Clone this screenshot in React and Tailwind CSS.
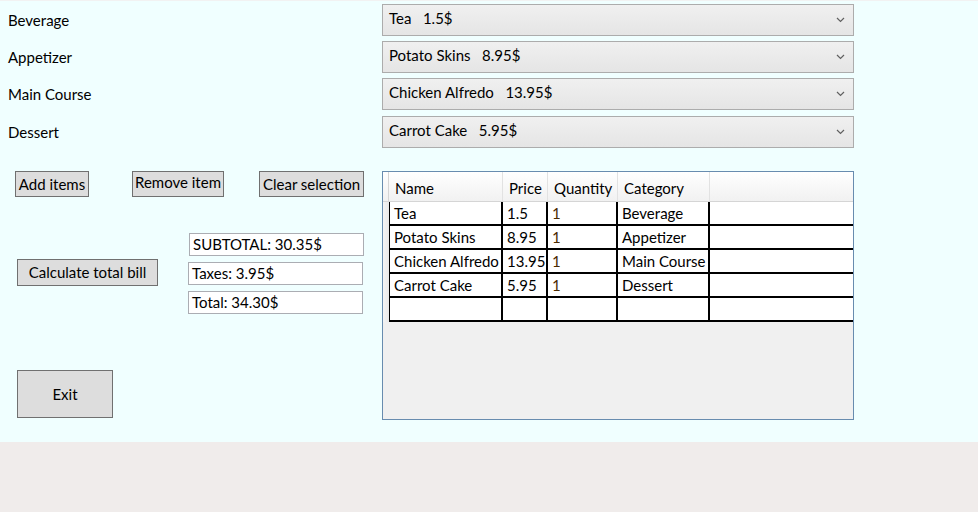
import React from "react";

const font = { fontFamily: 'Lato, "Noto Sans", sans-serif' };

function Chevron() {
  return (
    <svg width="9" height="6" viewBox="0 0 9 6" className="mr-[8px]">
      <path d="M1 1 L4.5 4.5 L8 1" fill="none" stroke="#606060" strokeWidth="1.2" />
    </svg>
  );
}

function Combo({ text, className = "" }) {
  return (
    <div
      className={`w-[472px] h-[32px] border border-[#ACACAC] bg-gradient-to-b from-[#F0F0F0] to-[#E5E5E5] flex items-center justify-between pl-[6px] ${className}`}
    >
      <span className="whitespace-pre pb-[3px]">{text}</span>
      <Chevron />
    </div>
  );
}

function Row({ label, combo, className = "" }) {
  return (
    <div className={`flex items-center ${className}`}>
      <div className="w-[382px] pl-[8px]">{label}</div>
      <Combo text={combo} />
    </div>
  );
}

const cols = [
  { name: "Name", w: 114 },
  { name: "Price", w: 45 },
  { name: "Quantity", w: 70 },
  { name: "Category", w: 92 },
];

const rows = [
  ["Tea", "1.5", "1", "Beverage"],
  ["Potato Skins", "8.95", "1", "Appetizer"],
  ["Chicken Alfredo", "13.95", "1", "Main Course"],
  ["Carrot Cake", "5.95", "1", "Dessert"],
  ["", "", "", ""],
];

function Grid() {
  return (
    <div className="w-[472px] h-[249px] border border-[#688CAF] bg-[#F0F0F0] flex flex-col">
      <div className="flex h-[30px] bg-gradient-to-b from-[#FFFFFF] to-[#F1F1F1] border-b border-[#D5D5D5]">
        <div className="w-[6px] border-r border-[#D5D5D5]"></div>
        {cols.map((c) => (
          <div
            key={c.name}
            style={{ width: c.w }}
            className="flex items-center border-r border-[#E2E2E2] pl-[6px] pt-[3px] whitespace-nowrap"
          >
            {c.name}
          </div>
        ))}
        <div className="flex-1"></div>
      </div>
      {rows.map((r, ri) => (
        <div key={ri} className="flex h-[24px]">
          <div className="w-[6px] bg-gradient-to-r from-[#F5F5F5] to-[#E8E8E8]"></div>
          <div className="flex flex-1 bg-white border-b-2 border-black">
            {r.map((cell, ci) => (
              <div
                key={ci}
                style={{ width: cols[ci].w }}
                className={`flex items-center pl-[4px] border-r-2 border-black whitespace-nowrap overflow-hidden ${ci === 0 ? "border-l" : ""} ${ci === 2 ? "text-[#4a2a00]" : ""}`}
              >
                {cell}
              </div>
            ))}
            <div className="flex-1"></div>
          </div>
        </div>
      ))}
    </div>
  );
}

function Btn({ children, className = "" }) {
  return (
    <div
      className={`bg-[#DDDDDD] border border-[#707070] flex items-center justify-center whitespace-nowrap ${className}`}
    >
      {children}
    </div>
  );
}

function Field({ children, className = "" }) {
  return (
    <div className={`w-[175px] h-[23px] border border-[#ABADB3] bg-white flex items-center pl-[3px] whitespace-nowrap ${className}`}>
      {children}
    </div>
  );
}

export default function App() {
  return (
    <div className="w-[978px] h-[512px] flex flex-col text-[15px] text-black leading-none" style={font}>
      <div className="h-[442px] bg-[#F0FFFF] border-t border-[#F2F2F2] flex flex-col">
        <Row label="Beverage" combo="Tea   1.5$" className="mt-[3px]" />
        <Row label="Appetizer" combo="Potato Skins   8.95$" className="mt-[5px]" />
        <Row label="Main Course" combo="Chicken Alfredo   13.95$" className="mt-[5px]" />
        <Row label="Dessert" combo="Carrot Cake   5.95$" className="mt-[6px]" />
        <div className="flex mt-[23px]">
          <div className="w-[382px] flex flex-col">
            <div className="flex h-[26px]">
              <Btn className="ml-[15px] w-[74px]">Add items</Btn>
              <Btn className="ml-[43px] w-[92px] pb-[3px]">Remove item</Btn>
              <Btn className="ml-[35px] w-[105px]">Clear selection</Btn>
            </div>
            <div className="flex mt-[36px]">
              <div className="flex pl-[17px]">
                <Btn className="w-[141px] h-[27px] mt-[26px]">Calculate total bill</Btn>
              </div>
              <div className="flex flex-col ml-[30px]">
                <Field className="ml-[1px] w-[174px] h-[23px]">SUBTOTAL: 30.35$</Field>
                <Field className="mt-[6px] h-[23px]">Taxes: 3.95$</Field>
                <Field className="mt-[6px] h-[22px]">Total: 34.30$</Field>
              </div>
            </div>
            <Btn className="ml-[17px] mt-[56px] w-[96px] h-[48px]">Exit</Btn>
          </div>
          <Grid />
        </div>
      </div>
      <div className="flex-1 bg-[#F0ECEB]"></div>
    </div>
  );
}
